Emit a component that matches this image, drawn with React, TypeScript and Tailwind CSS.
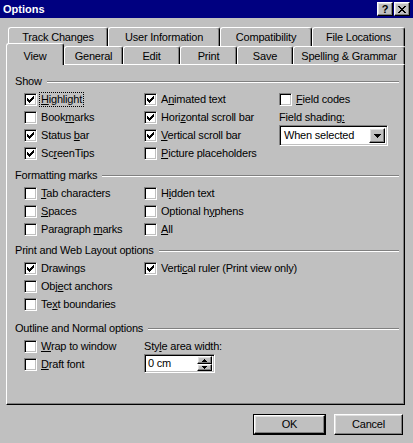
import React from "react";

const FONT = "font-['Liberation_Sans',Arial,sans-serif] text-[11px] leading-[13px] tracking-[-0.2px]";

function Check() {
  return (
    <svg width="7" height="7" viewBox="0 0 7 7" shapeRendering="crispEdges">
      <path
        fill="#000"
        d="M6 0h1v1h-1z M5 1h2v1h-2z M0 2h1v1h-1z M4 2h3v1h-3z M0 3h2v1h-2z M3 3h3v1h-3z M0 4h5v1h-5z M1 5h3v1h-3z M2 6h1v1h-1z"
      />
    </svg>
  );
}

function Box({ checked }: { checked?: boolean }) {
  return (
    <span className="w-[13px] h-[13px] shrink-0 bg-white border border-t-[#808080] border-l-[#808080] border-b-white border-r-white shadow-[inset_1px_1px_#000,inset_-1px_-1px_#c0c0c0] flex items-center justify-center">
      {checked && <Check />}
    </span>
  );
}

function L({ t, u }: { t: string; u: number }) {
  return (
    <>
      {t.slice(0, u)}
      <span className="underline underline-offset-[1px]">{t[u]}</span>
      {t.slice(u + 1)}
    </>
  );
}

function CB({ t, u, checked, focus }: { t: string; u: number; checked?: boolean; focus?: boolean }) {
  return (
    <div className="h-[18px] flex items-center gap-[2px]">
      <Box checked={checked} />
      <span
        className={
          "px-[1px] border whitespace-nowrap " +
          (focus ? "border-dotted border-black" : "border-transparent")
        }
      >
        <L t={t} u={u} />
      </span>
    </div>
  );
}

function Header({ t }: { t: string }) {
  return (
    <div className="h-[17px] flex items-center pl-[8px] pr-[5px]">
      <span className="whitespace-nowrap">{t}</span>
      <div className="flex-1 ml-[5px] h-[2px] border-t border-t-[#808080] border-b border-b-white" />
    </div>
  );
}

function Tab({ t, w, active }: { t: string; w: string; active?: boolean }) {
  return (
    <div
      className={
        "flex items-center justify-center bg-[#c0c0c0] border-l border-t border-r border-l-white border-t-white border-r-black rounded-tl-[3px] rounded-tr-[3px] shadow-[inset_-1px_0_#808080] whitespace-nowrap " +
        w +
        (active ? " h-[22px] mb-[-1px] relative z-10 pt-[4px]" : " h-full pt-[1px]")
      }
    >
      {t}
    </div>
  );
}

function Raised({ className, children }: { className?: string; children?: React.ReactNode }) {
  return (
    <div
      className={
        "bg-[#c0c0c0] border border-t-white border-l-white border-b-black border-r-black shadow-[inset_-1px_-1px_#808080,inset_1px_1px_#dfdfdf] flex items-center justify-center " +
        (className || "")
      }
    >
      {children}
    </div>
  );
}

export default function App() {
  return (
    <div className={"w-[413px] h-[443px] bg-[#c0c0c0] text-black overflow-hidden " + FONT}>
      {/* Title bar */}
      <div className="h-[18px] bg-[#000080] flex items-center justify-between pl-[3px] pr-[3px]">
        <span className="text-white font-bold tracking-normal">Options</span>
        <div className="flex items-center">
          <Raised className="w-[16px] h-[14px] font-bold text-[11px] leading-none">?</Raised>
          <Raised className="w-[16px] h-[14px] ml-[1px]">
            <svg width="8" height="7" viewBox="0 0 8 7" shapeRendering="crispEdges">
              <path
                fill="#000"
                d="M0 0h2v1h-2z M6 0h2v1h-2z M1 1h2v1h-2z M5 1h2v1h-2z M2 2h4v1h-4z M3 3h2v1h-2z M2 4h4v1h-4z M1 5h2v1h-2z M5 5h2v1h-2z M0 6h2v1h-2z M6 6h2v1h-2z"
              />
            </svg>
          </Raised>
        </div>
      </div>

      {/* Back tab row */}
      <div className="ml-[8px] mt-[9px] h-[19px] flex">
        <Tab t="Track Changes" w="w-[100px]" />
        <Tab t="User Information" w="w-[112px]" />
        <Tab t="Compatibility" w="w-[92px]" />
        <Tab t="File Locations" w="w-[93px]" />
      </div>
      {/* Front tab row */}
      <div className="ml-[6px] h-[18px] flex items-end">
        <Tab t="View" w="w-[58px]" active />
        <Tab t="General" w="w-[59px]" />
        <Tab t="Edit" w="w-[57px]" />
        <Tab t="Print" w="w-[57px]" />
        <Tab t="Save" w="w-[56px]" />
        <Tab t="Spelling & Grammar" w="w-[112px]" />
      </div>

      {/* Panel */}
      <div className="ml-[6px] w-[399px] h-[341px] border border-t-white border-l-white border-b-black border-r-black shadow-[inset_-1px_-1px_#808080] pt-[8px]">
        <Header t="Show" />
        <div className="grid grid-cols-[120px_135px_1fr] pl-[17px]">
          <div>
            <CB t="Highlight" u={0} checked focus />
            <CB t="Bookmarks" u={4} />
            <CB t="Status bar" u={7} checked />
            <CB t="ScreenTips" u={2} checked />
          </div>
          <div>
            <CB t="Animated text" u={1} checked />
            <CB t="Horizontal scroll bar" u={4} checked />
            <CB t="Vertical scroll bar" u={0} checked />
            <CB t="Picture placeholders" u={0} />
          </div>
          <div>
            <CB t="Field codes" u={0} />
            <div className="h-[18px] flex items-center">
              <L t="Field shading:" u={13} />
            </div>
            <div className="w-[109px] h-[21px] mt-[-1px] bg-white border border-t-[#808080] border-l-[#808080] border-b-white border-r-white shadow-[inset_1px_1px_#000,inset_-1px_-1px_#c0c0c0] flex items-center p-[2px]">
              <span className="flex-1 pl-[2px]">When selected</span>
              <Raised className="w-[16px] h-[15px]">
                <svg width="7" height="4" viewBox="0 0 7 4" shapeRendering="crispEdges">
                  <path fill="#000" d="M0 0h7v1h-7z M1 1h5v1h-5z M2 2h3v1h-3z M3 3h1v1h-1z" />
                </svg>
              </Raised>
            </div>
          </div>
        </div>

        <div className="mt-[5px]">
          <Header t="Formatting marks" />
          <div className="grid grid-cols-[120px_135px_1fr] pl-[17px]">
            <div>
              <CB t="Tab characters" u={0} />
              <CB t="Spaces" u={0} />
              <CB t="Paragraph marks" u={10} />
            </div>
            <div>
              <CB t="Hidden text" u={1} />
              <CB t="Optional hyphens" u={10} />
              <CB t="All" u={0} />
            </div>
          </div>
        </div>

        <div className="mt-[4px]">
          <Header t="Print and Web Layout options" />
          <div className="grid grid-cols-[120px_1fr] pl-[17px]">
            <div>
              <CB t="Drawings" u={6} checked />
              <CB t="Object anchors" u={3} />
              <CB t="Text boundaries" u={2} />
            </div>
            <div>
              <CB t="Vertical ruler (Print view only)" u={5} checked />
            </div>
          </div>
        </div>

        <div className="mt-[7px]">
          <Header t="Outline and Normal options" />
          <div className="grid grid-cols-[120px_1fr] pl-[17px]">
            <div>
              <CB t="Wrap to window" u={0} />
              <CB t="Draft font" u={0} />
            </div>
            <div>
              <div className="h-[18px] flex items-center">
                <L t="Style area width:" u={3} />
              </div>
              <div className="w-[71px] h-[19px] mt-[-1px] bg-white border border-t-[#808080] border-l-[#808080] border-b-white border-r-white shadow-[inset_1px_1px_#000,inset_-1px_-1px_#c0c0c0] flex items-center p-[2px]">
                <span className="flex-1 pl-[1px]">0 cm</span>
                <div className="flex flex-col w-[15px] h-[15px]">
                  <Raised className="w-[15px] h-[8px]">
                    <svg width="5" height="3" viewBox="0 0 5 3" shapeRendering="crispEdges">
                      <path fill="#000" d="M2 0h1v1h-1z M1 1h3v1h-3z M0 2h5v1h-5z" />
                    </svg>
                  </Raised>
                  <Raised className="w-[15px] h-[7px]">
                    <svg width="5" height="3" viewBox="0 0 5 3" shapeRendering="crispEdges">
                      <path fill="#000" d="M0 0h5v1h-5z M1 1h3v1h-3z M2 2h1v1h-1z" />
                    </svg>
                  </Raised>
                </div>
              </div>
            </div>
          </div>
        </div>
      </div>

      {/* Buttons */}
      <div className="mt-[9px] flex justify-end gap-[8px] pr-[10px]">
        <div className="w-[73px] h-[21px] border border-black">
          <Raised className="w-full h-full">OK</Raised>
        </div>
        <Raised className="w-[69px] h-[21px]">Cancel</Raised>
      </div>
    </div>
  );
}
